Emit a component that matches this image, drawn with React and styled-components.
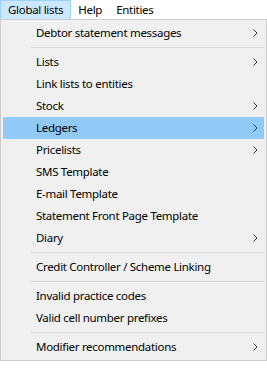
import React from "react";
import styled, { createGlobalStyle } from "styled-components";

const GlobalStyle = createGlobalStyle`
	html, body {
		margin: 0;
		padding: 0;
		background: #ffffff;
	}
	body {
		font-family: "Noto Sans", "Open Sans", sans-serif;
		font-size: 11.5px;
		letter-spacing: -0.3px;
		color: #000;
	}
`;

const MenuBar = styled.div`
	display: flex;
	height: 19px;
	background: #ffffff;
`;

const BarItem = styled.div`
	box-sizing: border-box;
	height: 19px;
	padding: 0 7px;
	display: flex;
	align-items: center;
	line-height: 1;
	background: ${(p) => (p.$active ? "#cce8ff" : "transparent")};
	border: ${(p) => (p.$active ? "1px solid #99d1ff" : "none")};
	border-bottom: none;
`;

const Popup = styled.div`
	box-sizing: border-box;
	width: 267px;
	background: #f0f0f0;
	border: 1px solid #cccccc;
	padding: 2px;
	display: flex;
	flex-direction: column;
`;

const Item = styled.div`
	height: 22px;
	display: flex;
	align-items: center;
	padding-left: 33px;
	padding-right: 6px;
	background: ${(p) => (p.$hover ? "#91c9f7" : "transparent")};
	white-space: nowrap;
`;

const Label = styled.span`
	flex: 1;
	line-height: 1;
	padding-bottom: 1px;
`;

const Separator = styled.div`
	height: 7px;
	display: flex;
	align-items: center;
	padding-left: 28px;

	&::after {
		content: "";
		flex: 1;
		height: 1px;
		background: #d7d7d7;
	}
`;

const Chevron = () => (
	<svg width="5" height="8" viewBox="0 0 5 8">
		<path d="M0.5 0.5 L4 4 L0.5 7.5" fill="none" stroke="#333" strokeWidth="1" />
	</svg>
);

const items = [
	{ label: "Debtor statement messages", sub: true },
	"-",
	{ label: "Lists", sub: true },
	{ label: "Link lists to entities" },
	{ label: "Stock", sub: true },
	{ label: "Ledgers", sub: true, hover: true },
	{ label: "Pricelists", sub: true },
	{ label: "SMS Template" },
	{ label: "E-mail Template" },
	{ label: "Statement Front Page Template" },
	{ label: "Diary", sub: true },
	"-",
	{ label: "Credit Controller / Scheme Linking" },
	"-",
	{ label: "Invalid practice codes" },
	{ label: "Valid cell number prefixes" },
	"-",
	{ label: "Modifier recommendations", sub: true },
];

function App() {
	return (
		<>
			<GlobalStyle />
			<MenuBar>
				<BarItem $active>Global lists</BarItem>
				<BarItem>Help</BarItem>
				<BarItem>Entities</BarItem>
			</MenuBar>
			<Popup>
				{items.map((item, index) =>
					item === "-" ? (
						<Separator key={index} />
					) : (
						<Item key={index} $hover={item.hover}>
							<Label>{item.label}</Label>
							{item.sub && <Chevron />}
						</Item>
					)
				)}
			</Popup>
		</>
	);
}

export default App;
